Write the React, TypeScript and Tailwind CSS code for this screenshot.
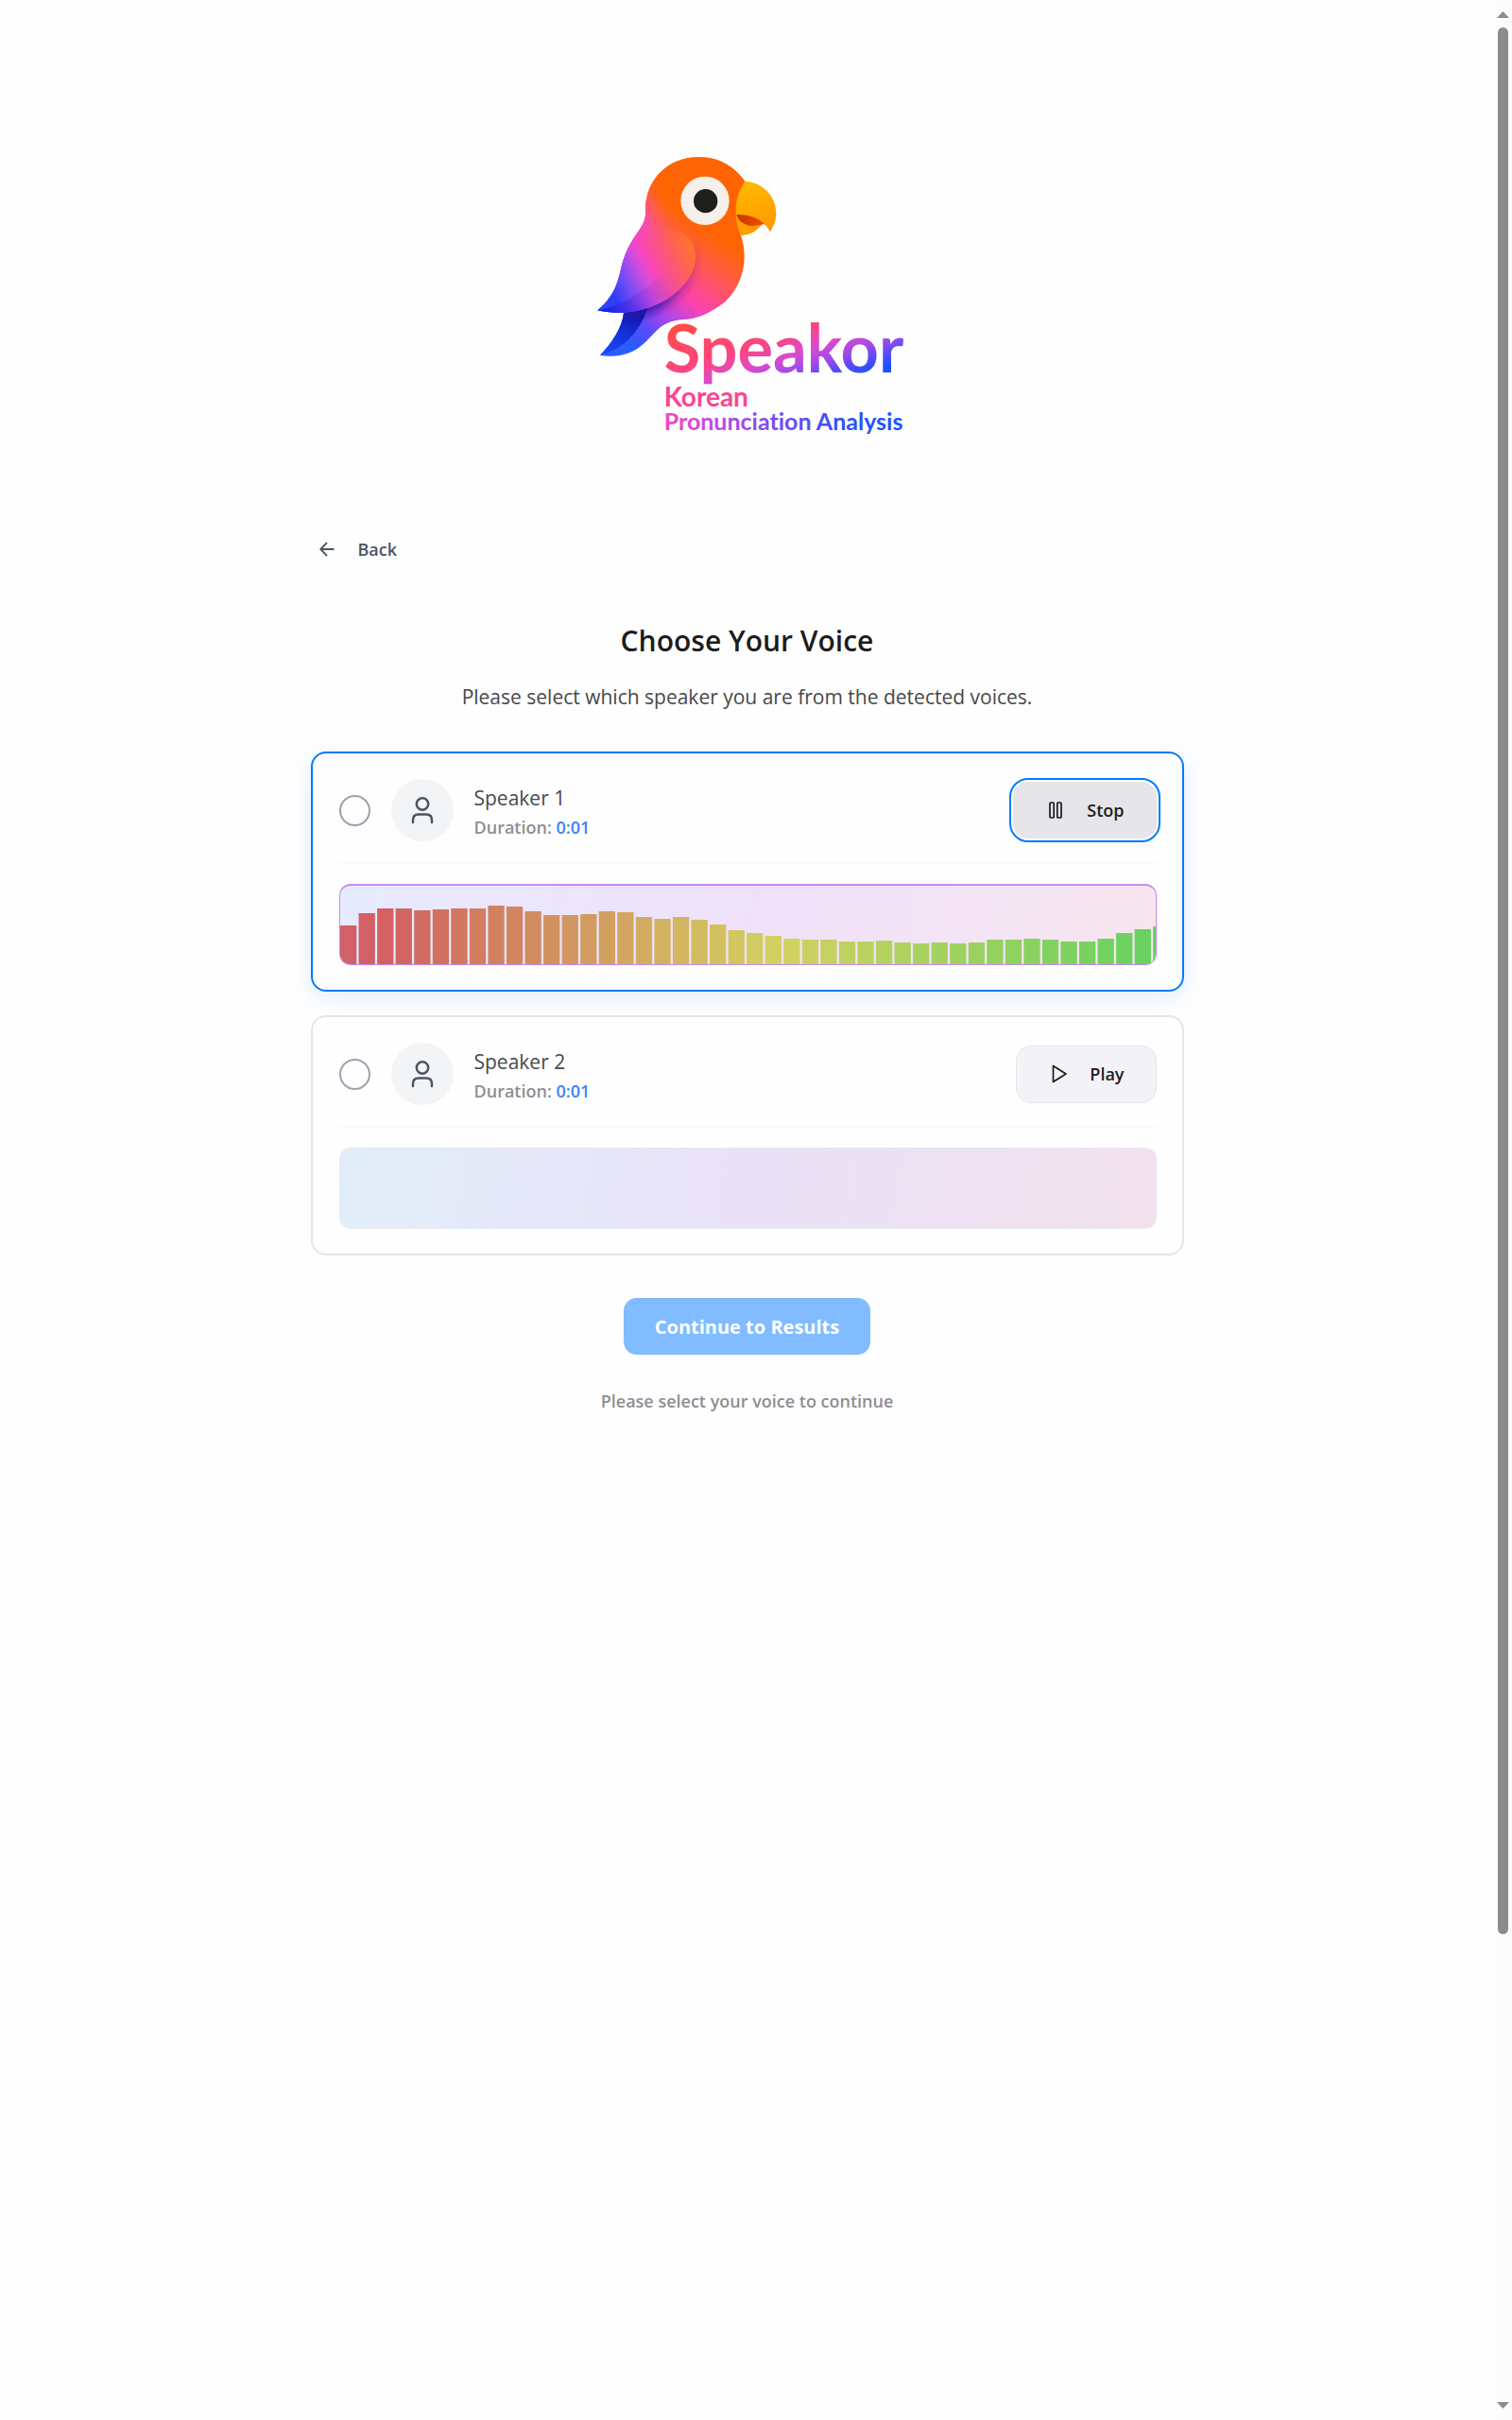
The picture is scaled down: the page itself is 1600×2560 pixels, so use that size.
import { useState } from "react";

const levels = [
  41, 54, 59, 59, 57, 58, 59, 59, 62, 61, 56, 52, 52, 53, 56, 55, 50, 48, 50, 47, 42, 36, 33, 30, 27,
  26, 26, 24, 24, 25, 23, 22, 23, 22, 23, 26, 26, 27, 26, 24, 24, 27, 33, 37, 40,
];

const bodyPath =
  "M535 155C500 105 450 78 388 78C290 78 219 150 219 245C221 275 212 290 200 310C175 345 155 375 142 430C130 480 120 520 67 565C95 571 120 574 150 573C145 620 112 670 75 707C85 709 98 710 110 710C185 710 215 670 250 634C275 607 300 597 340 594C370 592 400 585 440 560C495 530 533 465 533 395C533 365 528 345 520 322L530 260Z";

const wingPath =
  "M213 288C175 345 155 375 142 430C130 480 120 520 67 565C150 585 255 565 325 500C365 462 381 425 378 385C374 345 350 325 318 305Z";

function Logo() {
  return (
    <svg
      viewBox="-12 0 1110 1020"
      className="w-[370px] max-w-full"
      role="img"
      aria-label="Speakor Korean Pronunciation Analysis"
    >
      <defs>
        <clipPath id="bodyClip">
          <path d={bodyPath} />
        </clipPath>
        <linearGradient id="body" gradientUnits="userSpaceOnUse" x1="440" y1="330" x2="146" y2="759">
          <stop offset="0" stopColor="#ff6404" />
          <stop offset="0.17" stopColor="#ff5c48" />
          <stop offset="0.32" stopColor="#fe4a88" />
          <stop offset="0.42" stopColor="#fb42b0" />
          <stop offset="0.56" stopColor="#b347e8" />
          <stop offset="0.7" stopColor="#5a4bfa" />
          <stop offset="0.84" stopColor="#2a5cff" />
        </linearGradient>
        <linearGradient id="flank" gradientUnits="userSpaceOnUse" x1="150" y1="320" x2="345" y2="215">
          <stop offset="0" stopColor="#c04df0" />
          <stop offset="0.32" stopColor="#fb49c0" />
          <stop offset="0.55" stopColor="#fd5a68" stopOpacity="0.7" />
          <stop offset="0.78" stopColor="#ff6418" stopOpacity="0" />
        </linearGradient>
        <linearGradient id="wing" gradientUnits="userSpaceOnUse" x1="110" y1="500" x2="365" y2="365">
          <stop offset="0" stopColor="#2f3ff8" />
          <stop offset="0.2" stopColor="#7c4df5" />
          <stop offset="0.4" stopColor="#d84bdc" />
          <stop offset="0.52" stopColor="#fb46b8" />
          <stop offset="0.78" stopColor="#fc5c64" />
          <stop offset="1" stopColor="#ff7430" />
        </linearGradient>
        <linearGradient id="wingFade" gradientUnits="userSpaceOnUse" x1="250" y1="280" x2="250" y2="345">
          <stop offset="0" stopColor="#000" />
          <stop offset="1" stopColor="#fff" />
        </linearGradient>
        <mask id="wingMask" maskUnits="userSpaceOnUse" x="0" y="200" width="500" height="500">
          <rect x="0" y="200" width="500" height="500" fill="url(#wingFade)" />
        </mask>
        <linearGradient id="feather" gradientUnits="userSpaceOnUse" x1="90" y1="565" x2="375" y2="400">
          <stop offset="0" stopColor="#1024e8" />
          <stop offset="0.22" stopColor="#4a34ea" />
          <stop offset="0.45" stopColor="#b943e0" />
          <stop offset="0.66" stopColor="#f44ca0" />
          <stop offset="0.85" stopColor="#fc6258" stopOpacity="0.6" />
          <stop offset="1" stopColor="#fd7034" stopOpacity="0" />
        </linearGradient>
        <linearGradient id="shade" gradientUnits="userSpaceOnUse" x1="390" y1="370" x2="250" y2="560">
          <stop offset="0" stopColor="#c02040" stopOpacity="0.35" />
          <stop offset="0.5" stopColor="#8a20a0" stopOpacity="0.6" />
          <stop offset="1" stopColor="#2a10a0" stopOpacity="0.85" />
        </linearGradient>
        <filter id="soft" x="-20%" y="-20%" width="140%" height="140%">
          <feGaussianBlur stdDeviation="14" />
        </filter>
        <linearGradient id="tail" gradientUnits="userSpaceOnUse" x1="190" y1="575" x2="110" y2="700">
          <stop offset="0" stopColor="#0c1cb4" />
          <stop offset="1" stopColor="#1c44fa" />
        </linearGradient>
        <linearGradient id="beak" gradientUnits="userSpaceOnUse" x1="540" y1="160" x2="600" y2="320">
          <stop offset="0" stopColor="#ffb900" />
          <stop offset="1" stopColor="#ff9800" />
        </linearGradient>
        <linearGradient id="mouth" gradientUnits="userSpaceOnUse" x1="515" y1="265" x2="590" y2="290">
          <stop offset="0" stopColor="#c93400" />
          <stop offset="1" stopColor="#f24c00" />
        </linearGradient>
        <linearGradient id="name" gradientUnits="userSpaceOnUse" x1="222" y1="656" x2="332" y2="983">
          <stop offset="0" stopColor="#ff4c48" />
          <stop offset="0.38" stopColor="#fd4580" />
          <stop offset="0.57" stopColor="#d84ad0" />
          <stop offset="0.72" stopColor="#9a4bea" />
          <stop offset="0.82" stopColor="#5c4bf8" />
          <stop offset="0.95" stopColor="#1c50ff" />
        </linearGradient>
        <linearGradient id="tag" gradientUnits="userSpaceOnUse" x1="283" y1="0" x2="1037" y2="0">
          <stop offset="0" stopColor="#f646bd" />
          <stop offset="0.2" stopColor="#c04ae8" />
          <stop offset="0.5" stopColor="#6e4cf6" />
          <stop offset="0.75" stopColor="#3450f8" />
          <stop offset="1" stopColor="#1c54ff" />
        </linearGradient>
      </defs>

      <path d={bodyPath} fill="url(#body)" />
      <path
        d="M219 245C219 150 290 78 388 78L340 300L300 450L142 430C155 375 175 345 200 310C212 290 221 275 219 245Z"
        fill="url(#flank)"
      />
      <path d="M150 573C145 620 112 670 75 707C150 690 205 630 228 550L160 550Z" fill="url(#tail)" />
      <g clipPath="url(#bodyClip)">
        <path
          d="M378 360C390 430 365 480 325 520C285 560 220 590 150 590L150 540C260 540 340 470 360 370Z"
          fill="url(#shade)"
          filter="url(#soft)"
        />
      </g>
      <path d={wingPath} fill="url(#wing)" mask="url(#wingMask)" />
      <path
        d="M67 565C140 555 225 500 290 433L378 385C381 425 365 462 325 500C255 565 150 585 67 565Z"
        fill="url(#feather)"
      />
      <path
        d="M535 155C590 158 634 200 634 258C634 280 624 302 615 316C605 298 598 290 590 291C570 318 545 326 521 327C500 270 498 210 535 155Z"
        fill="url(#beak)"
      />
      <path d="M508 261C540 260 570 268 597 290C580 295 560 298 548 296C525 290 514 278 508 261Z" fill="url(#mouth)" />
      <circle cx="408" cy="217" r="77" fill="#f7efe9" />
      <circle cx="410" cy="218" r="38" fill="#1e1e1a" />

      <text x="278" y="763" fontFamily="Lato, sans-serif" fontWeight="700" fontSize="211" fill="url(#name)">
        Speakor
      </text>
      <text x="278" y="869" fontFamily="Lato, sans-serif" fontWeight="700" fontSize="84" fill="#fb4590">
        Korean
      </text>
      <text
        x="278"
        y="946"
        fontFamily="Lato, sans-serif"
        fontWeight="700"
        fontSize="75"
        fill="url(#tag)"
        className="[font-variant-ligatures:none]"
      >
        Pronunciation Analysis
      </text>
    </svg>
  );
}

function Waveform() {
  return (
    <svg viewBox="0 0 863 83" preserveAspectRatio="none" className="block h-full w-full" aria-hidden="true">
      {levels.map((level, i) => (
        <rect key={i} x={i * 19.55} y={83 - level} width={17.3} height={level} fill={`hsl(${-5 + i * 2.8} 56% 60%)`} />
      ))}
    </svg>
  );
}

function ArrowIcon() {
  return (
    <svg viewBox="0 0 16 16" className="size-4" fill="none" stroke="currentColor" strokeWidth="1.8" aria-hidden="true">
      <path d="M15.500 8H1.500M8 1L1.200 8L8 15" />
    </svg>
  );
}

function PersonIcon() {
  return (
    <svg viewBox="0 0 24 30" className="h-[30px] w-6" fill="none" stroke="#4b5563" strokeWidth="2.5" strokeLinecap="round" aria-hidden="true">
      <circle cx="12" cy="8.5" r="6.2" />
      <path d="M2 28V25.500C2 21.500 4.500 19.500 8 19.500H16C19.500 19.500 22 21.500 22 25.500V28" />
    </svg>
  );
}

function StopIcon() {
  return (
    <svg viewBox="0 0 14 18" className="h-[18px] w-3.5" fill="none" stroke="currentColor" strokeWidth="1.7" aria-hidden="true">
      <rect x="1" y="1" width="4.200" height="16" rx="1" />
      <rect x="8.800" y="1" width="4.200" height="16" rx="1" />
    </svg>
  );
}

function PlayIcon() {
  return (
    <svg viewBox="0 0 16 20" className="h-5 w-4" fill="none" stroke="currentColor" strokeWidth="1.7" strokeLinejoin="round" aria-hidden="true">
      <path d="M1.500 1.500V18.500L15 10Z" />
    </svg>
  );
}

type CardProps = {
  id: string;
  name: string;
  duration: string;
  playing: boolean;
  chosen: boolean;
  onChoose: () => void;
  onToggle: () => void;
};

function SpeakerCard({ id, name, duration, playing, chosen, onChoose, onToggle }: CardProps) {
  return (
    <li
      className={
        playing
          ? "rounded-2xl border-2 border-[#007aff] pt-[27px] pr-[27px] pb-[26px] pl-7 shadow-[0_6px_24px_rgba(0,122,255,0.12)]"
          : "rounded-2xl border-2 border-[#e5e5ea] pt-[27px] pr-[27px] pb-[26px] pl-7"
      }
    >
      <div className="flex items-center justify-between border-b-2 border-[#f9f9fa] pb-[22px]">
        <div className="flex items-center">
          <input
            id={id}
            type="radio"
            name="speaker"
            checked={chosen}
            onChange={onChoose}
            className="size-[33px] shrink-0 appearance-none rounded-full border-2 border-[#9ca3af] checked:border-8 checked:border-[#007aff]"
          />
          <span className="ml-[22px] flex size-[66px] shrink-0 items-center justify-center rounded-full bg-[#f3f4f6]">
            <PersonIcon />
          </span>
          <div className="ml-[22px] pt-1">
            <label htmlFor={id} className="block text-[21px] leading-8 text-[#48484a]">
              {name}
            </label>
            <p className="text-[18px] leading-[30px] font-semibold text-[#8e8e93]">
              Duration: <span className="text-[#3b82f6]">{duration}</span>
            </p>
          </div>
        </div>
        <button
          type="button"
          onClick={onToggle}
          className={
            playing
              ? "flex h-[60px] w-[152px] items-center justify-between rounded-2xl bg-[#e5e5ea] pr-[34px] pl-[38px] text-[18px] font-semibold text-[#1c1c1e] outline-2 outline-offset-2 outline-[#007aff]"
              : "flex h-[61px] w-[149px] items-center justify-between rounded-2xl border border-[#e5e5ea] bg-[#f2f2f7] pr-[33px] pl-[37px] text-[18px] font-semibold text-[#1c1c1e]"
          }
        >
          {playing ? <StopIcon /> : <PlayIcon />}
          {playing ? "Stop" : "Play"}
        </button>
      </div>
      <div
        className={
          playing
            ? "mt-[21px] h-[86px] overflow-hidden rounded-xl border border-t-2 border-[#c58cf6] bg-linear-[100deg,#e7ebff,#f0e1fb_50%,#f7e6ee]"
            : "mt-[21px] h-[86px] overflow-hidden rounded-xl border border-[#e5e9f2] bg-linear-[100deg,#e2eefa,#e9e1f7_50%,#f2e1ec]"
        }
      >
        {playing && <Waveform />}
      </div>
    </li>
  );
}

function Scrollbar() {
  return (
    <div className="flex h-screen w-[19px] shrink-0 flex-col items-center bg-[#fcfcfc]" aria-hidden="true">
      <svg viewBox="0 0 13 7" className="mt-3 h-[7px] w-[13px]" fill="#8b8b8b">
        <path d="M6.500 0L13 7H0Z" />
      </svg>
      <div className="mt-2.5 mb-[495px] w-[11px] flex-1 rounded-full bg-[#8b8b8b]" />
      <svg viewBox="0 0 13 7" className="mb-3 h-[7px] w-[13px]" fill="#8b8b8b">
        <path d="M0 0H13L6.500 7Z" />
      </svg>
    </div>
  );
}

export default function App() {
  const [chosen, setChosen] = useState<string | null>(null);
  const [playing, setPlaying] = useState<string | null>("Speaker 1");

  return (
    <div className="flex min-h-screen bg-[#fefefe] font-['Open_Sans',sans-serif]">
      <main className="flex flex-1 flex-col items-center px-6 pt-[140px]">
        <Logo />
        <div className="mt-[77px] flex w-full max-w-[924px] flex-col items-center">
          <button type="button" className="flex h-12 items-center gap-[25px] self-start px-[9px] text-[18px] font-semibold text-[#4b5563]">
            <ArrowIcon />
            Back
          </button>
          <h1 className="mt-[49px] text-[30px] leading-12 font-semibold text-[#1c1c1e]">Choose Your Voice</h1>
          <p className="mt-[19px] text-[21px] leading-8 text-[#48484a]">
            Please select which speaker you are from the detected voices.
          </p>
          <ul className="mt-[42px] flex w-full flex-col gap-[25px]">
            {["Speaker 1", "Speaker 2"].map((name) => (
              <SpeakerCard
                key={name}
                id={name === "Speaker 1" ? "speaker-1" : "speaker-2"}
                name={name}
                duration="0:01"
                playing={playing === name}
                chosen={chosen === name}
                onChoose={() => setChosen(name)}
                onToggle={() => setPlaying(playing === name ? null : name)}
              />
            ))}
          </ul>
          <button
            type="button"
            disabled={chosen === null}
            className="mt-[45px] h-[60px] rounded-[14px] bg-[#007aff] px-[33px] pt-0.5 text-[20px] font-bold text-white shadow-xs disabled:bg-[#80bcff]"
          >
            Continue to Results
          </button>
          <p className="mt-[33px] text-[18px] leading-8 font-semibold text-[#8e8e93]">Please select your voice to continue</p>
        </div>
      </main>
      <Scrollbar />
    </div>
  );
}
